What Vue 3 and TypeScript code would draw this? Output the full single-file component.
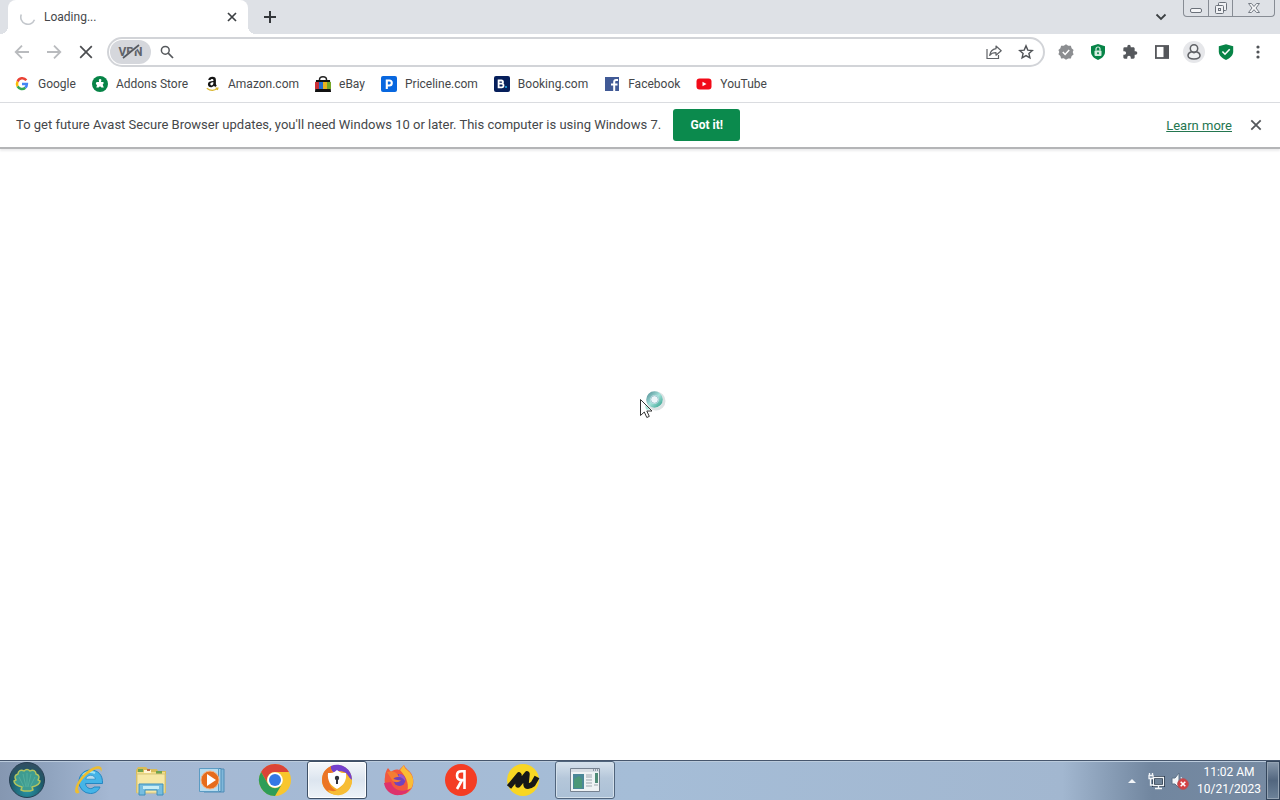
<script setup lang="ts">
interface Item {
  id: string
  label: string
}

const bookmarks: Item[] = [
  { id: 'google', label: 'Google' },
  { id: 'addons', label: 'Addons Store' },
  { id: 'amazon', label: 'Amazon.com' },
  { id: 'ebay', label: 'eBay' },
  { id: 'priceline', label: 'Priceline.com' },
  { id: 'booking', label: 'Booking.com' },
  { id: 'facebook', label: 'Facebook' },
  { id: 'youtube', label: 'YouTube' },
]

const apps: (Item & { open?: 'active' | 'idle' })[] = [
  { id: 'ie', label: 'Internet Explorer' },
  { id: 'explorer', label: 'Windows Explorer' },
  { id: 'wmp', label: 'Windows Media Player' },
  { id: 'chrome', label: 'Google Chrome' },
  { id: 'avast', label: 'Avast Secure Browser', open: 'active' },
  { id: 'firefox', label: 'Firefox' },
  { id: 'yandex', label: 'Yandex' },
  { id: 'market', label: 'Market' },
  { id: 'window', label: 'Application', open: 'idle' },
]
</script>

<template>
  <div class="desktop">
    <header class="tabstrip">
      <div class="tab">
        <svg class="spinner" width="16" height="16" viewBox="0 0 16 16"><path d="M1.3 5.5A7 7 0 1 0 14.5 10.8" fill="none" stroke="#c3c7cc" stroke-width="1.6" /></svg>
        <span class="tab-title">Loading...</span>
        <button class="tab-close" aria-label="Close tab">
          <svg width="16" height="16" viewBox="0 0 16 16"><path d="M4 4l8 8M12 4l-8 8" stroke="#3c4043" stroke-width="1.7" /></svg>
        </button>
      </div>
      <button class="new-tab" aria-label="New tab">
        <svg width="16" height="16" viewBox="0 0 16 16"><path d="M8 2v12M2 8h12" stroke="#34373b" stroke-width="2" /></svg>
      </button>
      <button class="tab-search" aria-label="Search tabs">
        <svg width="16" height="16" viewBox="0 0 16 16"><path d="M3.500 5.500L8 10l4.500-4.500" fill="none" stroke="#3c4043" stroke-width="1.8" /></svg>
      </button>
      <div class="win-controls">
        <button aria-label="Minimize"><svg width="14" height="16" viewBox="0 0 14 16"><rect x="1.500" y="8.500" width="11" height="4" rx="1.500" fill="#f4f5f7" stroke="#6b717a" /></svg></button>
        <button aria-label="Restore"><svg width="14" height="16" viewBox="0 0 14 16"><g fill="#f0f1f4" stroke="#6b717a"><rect x="4.500" y="2.500" width="8" height="8" rx="1" /><rect x="1.500" y="5.500" width="8" height="8" rx="1" /><rect x="4.500" y="8.500" width="2" height="2" /></g></svg></button>
        <button class="wide" aria-label="Close"><svg width="14" height="16" viewBox="0 0 14 16"><path d="M1.500 3.500h3L7 6.500l2.500-3h3L9 8l3.500 4.500h-3L7 9.700l-2.500 2.800h-3L5 8z" fill="#f4f5f7" stroke="#777d86" /></svg></button>
      </div>
    </header>

    <nav class="toolbar">
      <div class="group">
        <button class="tool" aria-label="Back"><svg width="16" height="16" viewBox="0 0 16 16"><path d="M15 8H2M8 1.700L1.700 8 8 14.300" fill="none" stroke="#b9bbbe" stroke-width="1.800" /></svg></button>
        <button class="tool" aria-label="Forward"><svg width="16" height="16" viewBox="0 0 16 16"><path d="M1 8h13M8 1.700L14.300 8 8 14.300" fill="none" stroke="#b9bbbe" stroke-width="1.800" /></svg></button>
        <button class="tool" aria-label="Stop"><svg width="16" height="16" viewBox="0 0 16 16"><path d="M2.200 2.200l11.600 11.600M13.800 2.200L2.200 13.800" stroke="#4b4d50" stroke-width="1.700" /></svg></button>
      </div>
      <div class="omnibox">
        <button class="vpn" aria-label="VPN off">
          <span>VPN</span>
          <svg class="slash" width="26" height="16" viewBox="0 0 26 16"><path d="M6 15L20 2" stroke="#d5d7dc" stroke-width="3.500" /><path d="M5 14L21 1" stroke="#55585e" stroke-width="1.700" /></svg>
        </button>
        <svg class="lens" width="16" height="16" viewBox="0 0 16 16"><circle cx="6.300" cy="6.300" r="3.900" fill="none" stroke="#55585c" stroke-width="1.500" /><path d="M9.200 9.200l4.800 4.800" stroke="#55585c" stroke-width="1.700" /></svg>
        <input type="text" aria-label="Address and search bar" />
        <button class="tool" aria-label="Share"><svg width="16" height="16" viewBox="0 0 16 16"><path d="M1 5v9.500h11.500V11" fill="none" stroke="#606367" stroke-width="1.200" /><path d="M10 2l5.200 4.700L10 11.200V8.700C7 8.700 5 9.500 3.700 11.400 4.200 7.800 6.200 5.200 10 4.700z" fill="none" stroke="#606367" stroke-width="1.200" stroke-linejoin="round" /></svg></button>
        <button class="tool" aria-label="Bookmark this tab"><svg width="16" height="16" viewBox="0 0 16 16"><path d="M8 1.900l1.800 4.200 4.500.4-3.400 3 1 4.400L8 11.600l-3.900 2.300 1-4.400-3.400-3 4.500-.4z" fill="none" stroke="#505357" stroke-width="1.400" /></svg></button>
      </div>
      <div class="group">
        <button class="tool" aria-label="Verified"><svg width="16" height="16" viewBox="0 0 16 16"><path d="M8 .3l2.200 1.500 2.700-.1.700 2.600 2 1.800L14.700 8l.9 2.400-2 1.600-.7 2.500-2.700-.1L8 15.700l-2.200-1.400-2.700.1-.7-2.500-2-1.600L1.300 8 .4 6l2-1.700.7-2.600 2.700.1z" fill="#8c8e91" /><path d="M4.800 8l2.300 2.400 4.100-4.500" fill="none" stroke="#fff" stroke-width="1.500" /></svg></button>
        <button class="tool" aria-label="Privacy guard"><svg width="16" height="16" viewBox="0 0 16 16"><path d="M8 0l7 2.300v5.500c0 3.900-3 6.500-7 8.200-4-1.700-7-4.300-7-8.200V2.300z" fill="#078447" /><rect x="4.500" y="6.500" width="7" height="5.500" rx="1" fill="#d5eee1" /><path d="M6 6.500V5a2 2 0 0 1 4 0v1.500" fill="none" stroke="#d5eee1" stroke-width="1.200" /><path d="M8 8.200v2M7 9.200h2" stroke="#078447" /></svg></button>
        <button class="tool" aria-label="Extensions"><svg width="16" height="16" viewBox="0 0 24 24"><path d="M20.500 11H19V7c0-1.100-.9-2-2-2h-4V3.500a2.500 2.500 0 0 0-5 0V5H4a2 2 0 0 0-2 2v3.800h1.500a2.700 2.700 0 0 1 0 5.400H2V20c0 1.100.9 2 2 2h3.800v-1.500a2.700 2.700 0 0 1 5.400 0V22H17c1.100 0 2-.9 2-2v-4h1.500a2.500 2.500 0 0 0 0-5z" fill="#55585c" /></svg></button>
        <button class="tool" aria-label="Side panel"><svg width="16" height="16" viewBox="0 0 16 16"><rect x="1.900" y="2" width="12.200" height="12" fill="#fff" stroke="#55575b" stroke-width="1.800" /><path d="M9.500 2h5v12h-5z" fill="#55575b" /></svg></button>
        <button class="tool profile" aria-label="Profile"><svg width="22" height="22" viewBox="0 0 22 22"><circle cx="11" cy="11" r="11" fill="#e6e7ea" /><g fill="#f1f2f3" stroke="#606266" stroke-width="1.500"><circle cx="11" cy="7.500" r="3.700" /><path d="M8.500 10.700C6.200 11.400 5 12.700 5 14.500c0 2.300 2.500 3.400 6 3.400s6-1.100 6-3.400c0-1.800-1.200-3.100-3.500-3.800C12 11.800 10 11.800 8.500 10.700z" /></g></svg></button>
        <button class="tool" aria-label="Security center"><svg width="16" height="16" viewBox="0 0 16 16"><path d="M8 .2l7.200 2v5.400c0 4-3.200 6.700-7.200 8.300C4 14.300.8 11.600.8 7.600V2.200z" fill="#078447" /><path d="M4.400 7.500l2.600 2.700 4.700-5" fill="none" stroke="#fff" stroke-width="1.600" /></svg></button>
        <button class="tool" aria-label="Menu"><svg width="16" height="16" viewBox="0 0 16 16"><g fill="#505357"><circle cx="8" cy="3" r="1.600" /><circle cx="8" cy="8" r="1.600" /><circle cx="8" cy="13" r="1.600" /></g></svg></button>
      </div>
    </nav>

    <nav class="bookmarks">
      <a v-for="b in bookmarks" :key="b.id" href="#" class="bookmark">
        <svg width="16" height="16" viewBox="0 0 16 16" aria-hidden="true">
          <g v-if="b.id === 'google'" fill="none" stroke-width="2.500">
            <path d="M12.300 4.300A5 5 0 0 0 3.600 5.600" stroke="#ea4335" />
            <path d="M3.600 5.600a5 5 0 0 0 0 4.800" stroke="#fbbc05" />
            <path d="M3.600 10.400a5 5 0 0 0 7.700 1.300" stroke="#34a853" />
            <path d="M11.300 11.700A5 5 0 0 0 12.900 8H8" stroke="#4285f4" />
          </g>
          <g v-else-if="b.id === 'addons'">
            <circle cx="8" cy="8" r="8" fill="#078447" />
            <path d="M7 5a1.300 1.300 0 1 1 2.200 0L9 6h2.500v1.700a1.200 1.200 0 0 0-.5 1.800l.8 2H9.500L8 10.300l-1.500 1.200H4.300l.7-2.200L3.800 7.700 4.500 6H7z" fill="#fff" />
          </g>
          <g v-else-if="b.id === 'amazon'">
            <path d="M4.200 3.900C4.600 1.800 6.300.8 8.400.8c2.500 0 3.500 1.200 3.500 3.200v3.600c0 1 .4 1.500.9 2.100l-1.600 1.400-1.300-1.400c-1.900 2.400-6 1.900-6-1.400 0-2.400 2-3.300 5.500-3.400V4.200c0-1.400-2.500-1.500-2.800-.1zM9.400 6.300c-1.900 0-3.100.5-3.100 1.800 0 1.900 3.100 1.800 3.100-1z" fill="#151515" />
            <path d="M2.800 12.200c3.500 2.700 7.500 2.500 10.800.4M11.600 12.200l2.300-.1-.6 1.900" fill="none" stroke="#d9b52c" stroke-width="1.200" />
          </g>
          <g v-else-if="b.id === 'ebay'">
            <path d="M4.500 5V3.800a3.500 3 0 0 1 7 0V5" fill="none" stroke="#222" stroke-width="1.500" />
            <path d="M1 4h14l1 12H0z" fill="#111" /><path d="M0 6h4v7H0z" fill="#c92f35" /><path d="M4 6h4v7H4z" fill="#236dce" /><path d="M8 6h4v7H8z" fill="#e8b31d" /><path d="M12 6h4v7h-4z" fill="#76a727" />
          </g>
          <g v-else-if="b.id === 'priceline'">
            <rect width="16" height="16" rx="2" fill="#0867df" /><path d="M5.800 13V4.500h2.500a2.500 2.500 0 0 1 0 5H6" fill="none" stroke="#fff" stroke-width="2.100" />
          </g>
          <g v-else-if="b.id === 'booking'">
            <rect width="16" height="16" rx="2" fill="#061f5b" /><path d="M4.600 4.500h2.800a1.600 1.600 0 0 1 0 3.200H4.600zm0 3.200h3.100a1.800 1.800 0 0 1 0 3.600H4.600z" fill="none" stroke="#fff" stroke-width="1.800" /><circle cx="12" cy="11" r="1.100" fill="#25a8e8" />
          </g>
          <g v-else-if="b.id === 'facebook'">
            <rect x="1" y="1" width="14" height="14" fill="#415a96" /><path d="M10.200 15V5.800c0-1.400.7-1.900 1.800-1.900h2M7 8.600h6.500" fill="none" stroke="#fff" stroke-width="2" />
          </g>
          <g v-else>
            <rect x=".5" y="2.500" width="15" height="11" rx="3" fill="#f20a18" /><path d="M6.500 5.700v4.600l4-2.300z" fill="#fff" />
          </g>
        </svg>
        <span>{{ b.label }}</span>
      </a>
    </nav>

    <section class="infobar">
      <span class="message">To get future Avast Secure Browser updates, you'll need Windows 10 or later. This computer is using Windows 7.</span>
      <button class="confirm">Got it!</button>
      <a class="learn" href="#">Learn more</a>
      <button class="dismiss" aria-label="Dismiss"><svg width="16" height="16" viewBox="0 0 16 16"><path d="M3.300 3.300l9.400 9.400M12.700 3.300l-9.400 9.400" stroke="#55585c" stroke-width="1.800" /></svg></button>
    </section>

    <main class="page">
      <svg class="pointer" width="30" height="34" viewBox="0 0 30 34">
        <defs>
          <linearGradient id="ring" x1="0" y1="0" x2="1" y2="1"><stop offset="0" stop-color="#5f9ba0" /><stop offset=".5" stop-color="#a6e3dc" /><stop offset="1" stop-color="#41a997" /></linearGradient>
        </defs>
        <circle cx="16" cy="14" r="8" fill="none" stroke="#dce2e3" stroke-width="3" />
        <circle cx="14.500" cy="12.500" r="6.300" fill="#f2fafa" stroke="url(#ring)" stroke-width="4" />
        <circle cx="14.500" cy="12.500" r="3.800" fill="#eef6fa" stroke="#8abac4" stroke-width=".8" />
        <path d="M.5 12.500v16l3.800-3.500 2.500 5.500 2.500-1.100-2.500-5.400H12z" fill="#fff" stroke="#333" stroke-linejoin="round" />
        <path d="M5 18l5 4.500H6z" fill="#a8e5d7" />
      </svg>
    </main>

    <footer class="taskbar">
      <button class="start" aria-label="Start">
        <svg width="38" height="38" viewBox="0 0 38 38">
          <defs><radialGradient id="orb" cx=".5" cy=".8" r=".8"><stop offset="0" stop-color="#2794a6" /><stop offset=".6" stop-color="#1d5968" /><stop offset="1" stop-color="#344e62" /></radialGradient></defs>
          <circle cx="19" cy="19" r="17.500" fill="url(#orb)" stroke="#263f53" />
          <path d="M13 29l1-3c-4-1-8-3-8-6l2-1c-2-3-1-5 2-6 0-3 3-5 6-3 2-2 4-2 6 0 3-2 6 0 6 3 3 1 4 3 2 6l2 1c0 3-4 5-8 6l1 3-3 1h-6z" fill="#3f9c91" stroke="#b3c45e" stroke-width="1.500" stroke-linejoin="round" />
          <path d="M16 26l-5-10M18 26l-3-13M19 26V12M20 26l3-13M22 26l5-10" stroke="#53ae9d" />
        </svg>
      </button>
      <div class="apps">
        <button v-for="a in apps" :key="a.id" class="app" :class="a.open" :aria-label="a.label">
          <svg width="34" height="34" viewBox="0 0 34 34">
            <g v-if="a.id === 'ie'">
              <path d="M28 24c-1.500 4-5 6.500-9.500 6.500A11.500 11.500 0 0 1 7 18.500C7 12 12 7 18.500 7 26 7 31 12 30.500 20.500H13.500c.4 5.500 6.500 6.300 8.500 3.500z" fill="#45b4e7" stroke="#2587c2" />
              <path d="M13.800 16.200h9.600c-.6-5.200-8.600-5.200-9.600 0z" fill="#b8ddec" stroke="#2587c2" stroke-width=".7" />
              <path d="M11 12c3-3 8-4 12-2" fill="none" stroke="#9be4fa" stroke-width="2" />
              <path d="M7.500 29.500C3.500 32 2 29 4 23 7 15 15 6 24 3.500c5-1.300 7 1.500 5 5.500 0-3.500-3-4-7-2C14 11 7 19 5.800 26z" fill="#edbd30" />
            </g>
            <g v-else-if="a.id === 'explorer'">
              <path d="M2 7l2-3h8l2 2h9l1 2h8v22H2z" fill="#d8bc59" />
              <path d="M3 9h28v19H3z" fill="#f3df8a" /><path d="M4 6h5v3H4zM22 8h6v3h-6z" fill="#70a44f" /><path d="M10 7h7v3h-7z" fill="#fff3d1" /><path d="M13 6h3v2h-3z" fill="#bf6942" />
              <path d="M3 11h28v19H3z" fill="#f6e8a7" stroke="#d8c47b" />
              <path d="M5 21h24v11h-6v-5H11v5H5z" fill="#77bddf" stroke="#3f90bc" /><path d="M9 23h16v3H9z" fill="#c9edf5" />
            </g>
            <g v-else-if="a.id === 'wmp'">
              <path d="M8 6h20v23H8z" fill="#80b8da" stroke="#4e8db7" /><path d="M6 5.500h19v23H6z" fill="#a4d2e9" stroke="#4e8db7" /><path d="M3.500 5.500h19v23h-19z" fill="#b8dcef" stroke="#5b9bc3" />
              <circle cx="14" cy="17" r="9" fill="#e66c1c" stroke="#f2b283" /><path d="M11 11v12l9-6z" fill="#fff" />
            </g>
            <g v-else-if="a.id === 'chrome'">
              <circle cx="17" cy="17" r="16" fill="#f8c62e" />
              <path d="M3.100 9A16 16 0 0 1 30.900 9H17a8 8 0 0 0-7 12z" fill="#db4437" />
              <path d="M3.100 9A16 16 0 0 0 17 33l7-12a8 8 0 0 1-14 0z" fill="#2e9d57" />
              <circle cx="17" cy="17" r="7.800" fill="#fff" /><circle cx="17" cy="17" r="6" fill="#3478e5" />
            </g>
            <g v-else-if="a.id === 'avast'">
              <circle cx="17" cy="17" r="15" fill="#f7b325" /><path d="M11 3a15 15 0 0 1 21 14c-4-2-3-6-8-8-4-2-8-1-10 1-2-2-4-4-3-7z" fill="#7441ce" /><path d="M11 3c-1 5 3 8 9 8L9 16c0 6 3 10 10 13-9 4-17-3-17-12C2 10 5 6 11 3z" fill="#eb7425" /><path d="M32 17c0 8-5 14-12 15-6 1-10-2-12-5 10 4 16-3 18-15z" fill="#f7bd35" />
              <path d="M17 7c3 3 6 3 9 3 1 8-3 13-9 16-6-3-10-8-9-16 3 0 6 0 9-3z" fill="#fff" /><circle cx="17" cy="15" r="2.200" fill="#30313a" /><path d="M16 15h2v6h-2z" fill="#30313a" />
            </g>
            <g v-else-if="a.id === 'firefox'">
              <path d="M3 14c0-4 1-6 3-9l3 4c2-2 5-3 8-2l5-5c1 4 6 5 8 10 4 10-1 20-13 20C8 32 1 24 3 14z" fill="#f2583d" />
              <path d="M18 7l4-5c0 5 8 6 9 14 1 6-2 11-6 14 2-8 1-14-7-23z" fill="#fabd36" /><path d="M2 20c1 8 8 13 16 12 5-1 9-3 11-7-7 5-18 3-20-6z" fill="#dd326c" />
              <circle cx="17.500" cy="17" r="6" fill="#7143bc" /><path d="M5 9c6-2 10 0 12 5-2 0-4 0-6 2 3 0 4 2 8 1-2 3-7 3-9 0z" fill="#f47d32" /><path d="M17 11c4 0 7 3 6 7-2-3-4-4-6-4z" fill="#9b56c7" />
            </g>
            <g v-else-if="a.id === 'yandex'">
              <circle cx="17" cy="17" r="16" fill="#f43d24" /><path d="M20.500 8.300h-3c-2.800 0-4.500 1.600-4.500 4.200s1.700 4.500 4.500 4.500h3M20.500 7v19M18 17l-5 9" fill="none" stroke="#fff" stroke-width="2.600" />
            </g>
            <g v-else-if="a.id === 'market'">
              <circle cx="17" cy="17" r="16" fill="#f8d623" /><path d="M3 24L13 12l-1 10 9-11-1 10c0 3 3 3 7 0l4-7" fill="none" stroke="#171717" stroke-width="5.500" stroke-linejoin="round" />
            </g>
            <g v-else>
              <path d="M2.500 5.500h29v23h-29z" fill="#eef2f5" stroke="#768291" /><path d="M3 6h28v3H3z" fill="#d8dee5" /><path d="M25 7h1M27 7h1M29 7h1" stroke="#46556a" /><path d="M5 11h11v15H5z" fill="#4a8798" /><path d="M6 25V16l5-3 3 3v9z" fill="#4b9778" /><path d="M18 12h6M18 14h6M18 17h6M18 20h6M18 23h6M26 22h4" stroke="#9ba5ad" /><path d="M27 10h3v10h-3z" fill="#4f8b77" />
            </g>
          </svg>
        </button>
      </div>
      <div class="tray">
        <button class="tray-button" aria-label="Show hidden icons"><svg width="16" height="16" viewBox="0 0 16 16"><path d="M4 10l4-4 4 4z" fill="#f2f5f8" /></svg></button>
        <button class="tray-button" aria-label="Network"><svg width="18" height="18" viewBox="0 0 18 18"><path d="M6.500 5.500h10v8h-10z" fill="#6f8398" stroke="#243448" stroke-width="3" /><path d="M6.500 5.500h10v8h-10zM11.500 14v2.500M8 16.500h7M3.500 7v6h3M2 3.500h4v3H2zM2.500 1v2M5.500 1v2" fill="none" stroke="#f2f5f8" stroke-width="1.300" /></svg></button>
        <button class="tray-button" aria-label="Volume muted"><svg width="18" height="18" viewBox="0 0 18 18"><path d="M1 6h3l4-5v15l-4-4H1z" fill="#f3f6f8" stroke="#5d7186" /><path d="M10 5c1.500 2 1.500 5 0 7" fill="none" stroke="#eef2f5" /><circle cx="12" cy="12" r="5.300" fill="#d44143" stroke="#b95055" /><path d="M9.700 9.700l4.600 4.600M14.300 9.700l-4.600 4.600" stroke="#fff" stroke-width="1.600" /></svg></button>
        <div class="clock"><span>11:02 AM</span><span>10/21/2023</span></div>
        <button class="show-desktop" aria-label="Show desktop"></button>
      </div>
    </footer>
  </div>
</template>

<style>
body { margin: 0; }
</style>

<style scoped>
.desktop {
  display: flex;
  flex-direction: column;
  min-height: 100vh;
  background: #fff;
  font-family: Roboto, "Open Sans", sans-serif;
  font-size: 12px;
  color: #45474a;
}
button {
  display: flex;
  align-items: center;
  justify-content: center;
  padding: 0;
  border: 0;
  background: none;
  font: inherit;
  color: inherit;
}
svg { display: block; flex: none; }
.tabstrip {
  display: flex;
  align-items: center;
  height: 34px;
  padding: 0 5px 0 8px;
  background: #dee1e6;
}
.tab {
  position: relative;
  display: flex;
  align-items: center;
  gap: 8px;
  box-sizing: border-box;
  width: 240px;
  height: 34px;
  padding: 0 8px 0 12px;
  border-radius: 8px 8px 0 0;
  background: #fff;
}
.tab::before, .tab::after {
  content: "";
  position: absolute;
  bottom: 0;
  width: 8px;
  height: 8px;
}
.tab::before { left: -8px; background: radial-gradient(circle at 0 0, transparent 8px, #fff 8px); }
.tab::after { right: -8px; background: radial-gradient(circle at 100% 0, transparent 8px, #fff 8px); }
.tab-title { flex: 1; }
.new-tab { width: 28px; height: 28px; margin-left: 8px; }
.tab-search { width: 28px; height: 28px; margin-left: auto; }
.win-controls {
  display: flex;
  align-self: flex-start;
  height: 16px;
  margin-left: 8px;
  border: 1px solid #878c94;
  border-top: 0;
  border-radius: 0 0 4px 4px;
}
.win-controls button { width: 24px; height: 16px; }
.win-controls button + button { border-left: 1px solid #878c94; }
.win-controls .wide { width: 42px; }
.toolbar {
  display: flex;
  align-items: center;
  gap: 7px;
  height: 36px;
  padding: 0 8px;
}
.group { display: flex; gap: 4px; }
.tool { width: 28px; height: 28px; }
.omnibox {
  display: flex;
  align-items: center;
  flex: 1;
  box-sizing: border-box;
  height: 30px;
  padding: 0 3px 0 1px;
  border: 2px solid #d2d4d8;
  border-radius: 15px;
}
.omnibox .tool + .tool { margin-left: 4px; }
.vpn {
  position: relative;
  width: 41px;
  height: 24px;
  border-radius: 12px;
  background: #d5d7dc;
  font-weight: 700;
  color: #606369;
}
.slash { position: absolute; top: 4px; left: 8px; }
.lens { margin-left: 8px; }
.omnibox input {
  flex: 1;
  min-width: 0;
  padding: 0 8px;
  border: 0;
  outline: 0;
  background: none;
  font: inherit;
}
.bookmarks {
  display: flex;
  align-items: center;
  gap: 16px;
  height: 32px;
  padding: 0 14px;
  border-bottom: 1px solid #dadce0;
}
.bookmark {
  display: flex;
  align-items: center;
  gap: 8px;
  height: 28px;
  margin-bottom: 4px;
  color: inherit;
  text-decoration: none;
  white-space: nowrap;
}
.infobar {
  display: flex;
  align-items: center;
  height: 44px;
  padding: 0 16px;
  border-bottom: 2px solid #b4b5b7;
  box-shadow: 0 2px 2px #ececed;
  font-size: 13px;
}
.message { margin-bottom: 2px; white-space: nowrap; }
.confirm {
  width: 67px;
  height: 32px;
  margin-left: 12px;
  border-radius: 3px;
  background: #0b8a4d;
  font-size: 12px;
  font-weight: 700;
  color: #fff;
}
.learn { margin-left: auto; color: #247650; text-decoration: underline; }
.dismiss { width: 16px; height: 16px; margin-left: 16px; }
.page { position: relative; flex: 1; }
.pointer { position: absolute; left: 50%; top: 39%; }
.taskbar {
  display: flex;
  align-items: flex-start;
  box-sizing: border-box;
  height: 40px;
  border-top: 1px solid #46566d;
  background: linear-gradient(90deg, #8597b1 0, #90a4bf 50px, #a5b8d3 110px, #a5bdd7 50%, #a2b7d0 83%, #71869f 90%, #778ba3 100%);
  box-shadow: inset 0 1px #bbcbdc;
}
.start { width: 54px; height: 38px; }
.apps { display: flex; gap: 2px; margin-left: 5px; }
.app {
  box-sizing: border-box;
  width: 60px;
  height: 38px;
  border: 1px solid transparent;
  border-radius: 3px;
}
.app.active { border-color: #3e5066; background: linear-gradient(#f4f7fa, #dce5ef 50%, #edf3f8); box-shadow: inset 0 0 0 1px #fff; }
.app.idle { border-color: #50647c; background: linear-gradient(#d6e1ec, #b5c7da 45%, #abc0d6); box-shadow: inset 0 0 0 1px #d3e0eb; }
.tray { display: flex; align-items: center; height: 100%; margin-left: auto; }
.tray-button { width: 24px; height: 24px; }
.clock {
  display: flex;
  flex-direction: column;
  align-items: center;
  width: 74px;
  line-height: 17px;
  color: #fff;
}
.show-desktop {
  box-sizing: border-box;
  width: 14px;
  height: 39px;
  border: 1px solid #33455b;
  background: linear-gradient(#8798ab, #52667f 50%, #6d8299);
  box-shadow: inset 0 0 0 1px #94a3b3;
}
</style>
